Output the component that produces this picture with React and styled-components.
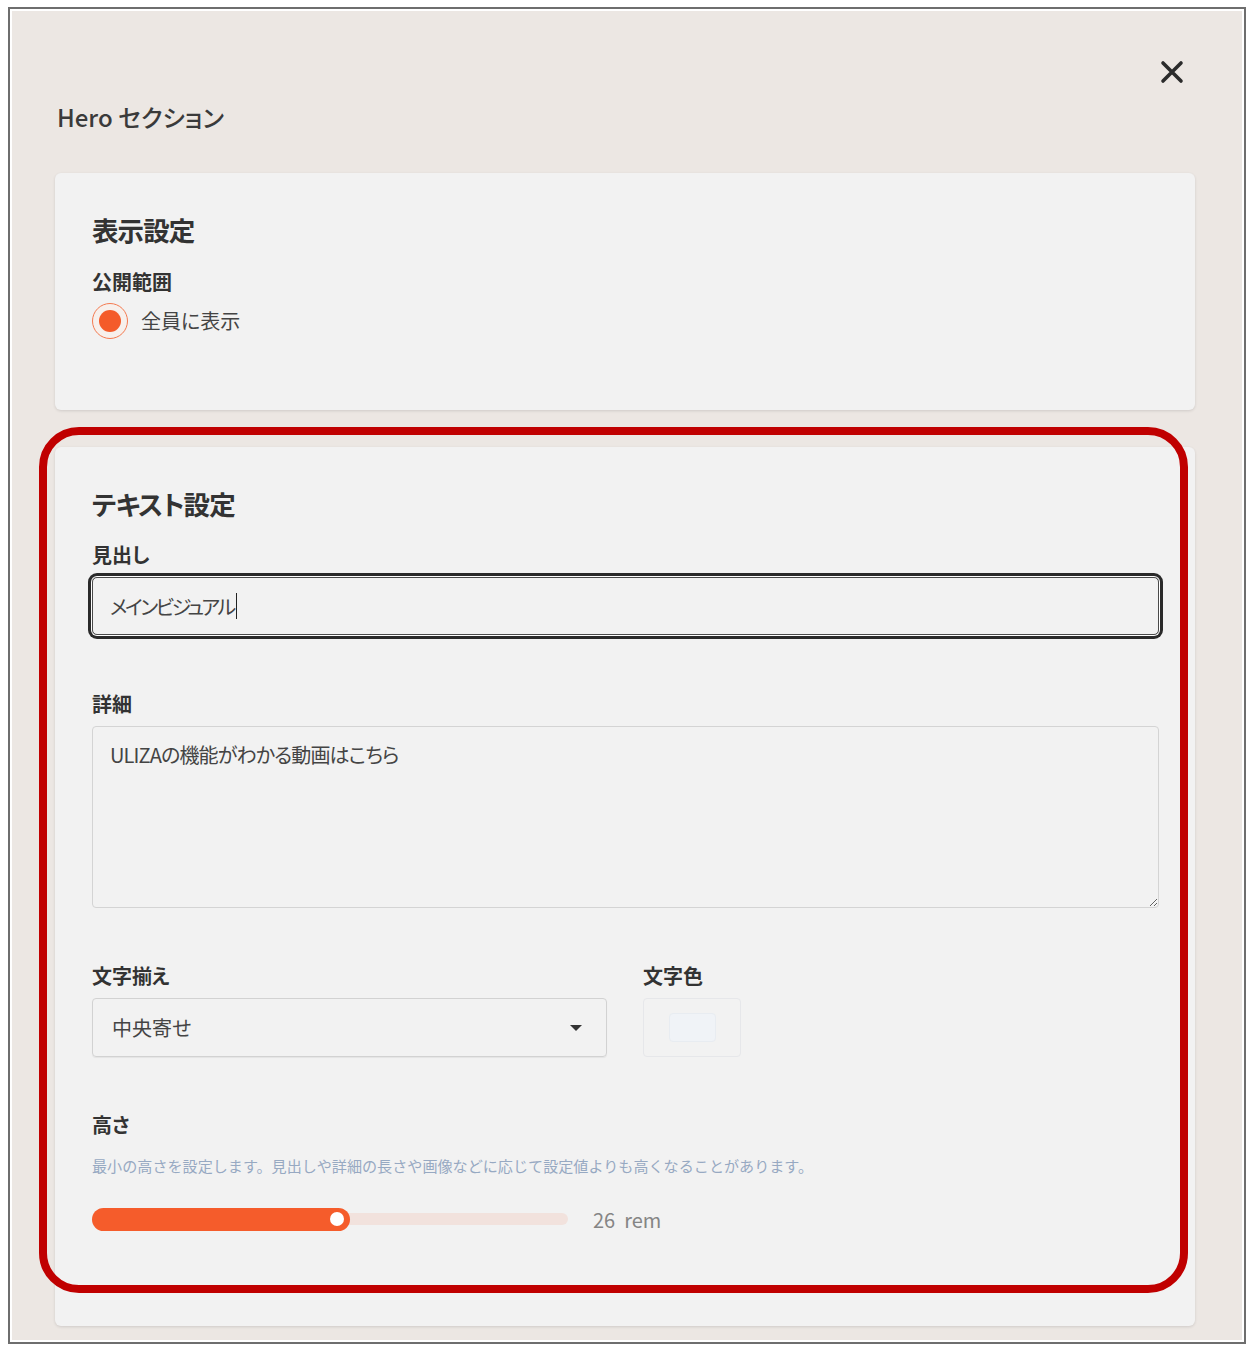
import React from 'react';
import styled, { createGlobalStyle } from 'styled-components';

const GlobalStyle = createGlobalStyle`
  * {
    box-sizing: border-box;
  }
  body {
    margin: 0;
    background: #fff;
    color: #333;
    font-family: "Noto Sans CJK JP", "Noto Sans", sans-serif;
    font-feature-settings: "palt";
  }
`;

const Page = styled.div`
  padding: 7px 0 0 8px;
`;

const Frame = styled.div`
  width: 1238px;
  height: 1337px;
  border: 2px solid #6e6e6e;
  padding: 2px;
  background: #fff;
`;

const Drawer = styled.div`
  height: 100%;
  background: #ece7e3;
  padding: 49px 47px 14px 43px;
  display: flex;
  flex-direction: column;
`;

const CloseRow = styled.div`
  display: flex;
  justify-content: flex-end;
  padding-right: 11px;
  height: 24px;
`;

const CloseButton = styled.button`
  width: 24px;
  height: 24px;
  padding: 0;
  border: none;
  background: transparent;
  cursor: pointer;
  display: flex;
`;

const Title = styled.h1`
  margin: 17px 0 40px 2px;
  font-size: 24px;
  line-height: 32px;
  font-weight: 500;
  color: #3a3a3a;
`;

const Card = styled.section`
  position: relative;
  background: #f2f2f2;
  border-radius: 6px;
  box-shadow: 0 1px 3px rgba(0, 0, 0, 0.12);
  padding: 38px 36px ${(p) => p.$bottom}px 37px;
  margin-top: ${(p) => p.$top || 0}px;
  display: flex;
  flex-direction: column;
`;

/* red outline drawn around the text settings card */
const Highlight = styled.div`
  position: absolute;
  top: -20px;
  left: -16px;
  right: 7px;
  bottom: 33px;
  border: 8.5px solid #c00000;
  border-radius: 40px;
  pointer-events: none;
`;

const SectionTitle = styled.h2`
  margin: 0;
  font-size: 26.5px;
  line-height: 38px;
  font-weight: 700;
  letter-spacing: -0.9px;
  color: #333;
`;

const Field = styled.div`
  display: flex;
  flex-direction: column;
  gap: 8px;
  margin-top: ${(p) => p.$top}px;
  width: ${(p) => (p.$width ? `${p.$width}px` : 'auto')};
`;

const Label = styled.label`
  font-size: 20px;
  line-height: 28px;
  font-weight: 700;
  color: #333;
`;

const RadioRow = styled.div`
  display: flex;
  align-items: center;
  gap: 13px;
  margin-top: 7px;
  font-size: 20px;
  line-height: 32px;
  color: #444;
`;

const RadioMark = styled.span`
  width: 36px;
  height: 36px;
  border-radius: 50%;
  border: 1.5px solid #f47a50;
  background: #f7f0ec;
  display: flex;
  align-items: center;
  justify-content: center;

  &::after {
    content: '';
    width: 22px;
    height: 22px;
    border-radius: 50%;
    background: #f45b2a;
  }
`;

const TextBox = styled.div`
  height: 58px;
  border: 1px solid #4a4a4a;
  border-radius: 5px;
  box-shadow: 0 0 0 1px #fff, 0 0 0 4px #2a2a2a;
  padding: 0 17px;
  display: flex;
  align-items: center;
  font-size: 20px;
  letter-spacing: -2.4px;
  color: #444;
`;

const Caret = styled.span`
  width: 1.5px;
  height: 26px;
  margin-left: 2px;
  background: #222;
`;

const TextArea = styled.textarea`
  display: block;
  width: 100%;
  height: 182px;
  padding: 14px 17px;
  border: 1px solid #d4d4d4;
  border-radius: 4px;
  background: #f2f2f2;
  font-family: inherit;
  font-feature-settings: "palt";
  font-size: 20px;
  line-height: 28px;
  letter-spacing: -0.85px;
  color: #444;
  resize: vertical;
  outline: none;
`;

const Row = styled.div`
  display: flex;
  gap: 36px;
  margin-top: 54px;
`;

const Select = styled.div`
  height: 59px;
  border: 1px solid #d2d2d2;
  border-radius: 4px;
  box-shadow: 0 1px 1px rgba(0, 0, 0, 0.06);
  padding: 0 24px 0 19px;
  display: flex;
  align-items: center;
  justify-content: space-between;
  font-size: 20px;
  color: #444;
`;

const Arrow = styled.span`
  width: 0;
  height: 0;
  border-left: 6px solid transparent;
  border-right: 6px solid transparent;
  border-top: 6px solid #333;
`;

const ColorBox = styled.div`
  width: 98px;
  height: 59px;
  border: 1px solid #e6e7ea;
  border-radius: 4px;
  display: flex;
  align-items: center;
  justify-content: center;
`;

const Swatch = styled.span`
  width: 47px;
  height: 29px;
  border-radius: 4px;
  border: 1px solid #e8ecf1;
  background: ${(p) => p.$color};
`;

const Helper = styled.p`
  margin: 14px 0 0;
  font-size: 15.1px;
  line-height: 24px;
  font-feature-settings: normal;
  color: #97a9c2;
`;

const SliderRow = styled.div`
  margin-top: 27px;
  height: 30px;
  display: flex;
  align-items: center;
  gap: 25px;
`;

const Track = styled.div`
  width: 476px;
  height: 12px;
  border-radius: 6px;
  background: #f2e2dd;
  display: flex;
  align-items: center;
`;

const Fill = styled.div`
  flex: none;
  height: 23px;
  border-radius: 12px;
  background: #f55c2b;
  display: flex;
  align-items: center;
  justify-content: flex-end;
  padding-right: 6px;
`;

const Thumb = styled.span`
  width: 14px;
  height: 14px;
  border-radius: 50%;
  background: #fff;
`;

const Value = styled.div`
  display: flex;
  gap: 9px;
  font-size: 20px;
  color: #858585;
`;

const CloseIcon = () => (
  <svg width="24" height="24" viewBox="0 0 24 24" fill="none">
    <path d="M3 3L21 21M21 3L3 21" stroke="#2b2b2b" strokeWidth="3.6" strokeLinecap="round" />
  </svg>
);

export default function App() {
  const height = { value: 26, min: 0, max: 48 };
  const pct = ((height.value - height.min) / (height.max - height.min)) * 100;

  return (
    <>
      <GlobalStyle />
      <Page>
        <Frame>
          <Drawer>
            <CloseRow>
              <CloseButton aria-label="閉じる">
                <CloseIcon />
              </CloseButton>
            </CloseRow>
            <Title>Hero セクション</Title>

            <Card $bottom={71}>
              <SectionTitle>表示設定</SectionTitle>
              <Field $top={19}>
                <Label>公開範囲</Label>
              </Field>
              <RadioRow>
                <RadioMark />
                全員に表示
              </RadioRow>
            </Card>

            <Card $top={37} $bottom={92}>
              <SectionTitle>テキスト設定</SectionTitle>
              <Field $top={18}>
                <Label>見出し</Label>
                <TextBox>
                  メインビジュアル
                  <Caret />
                </TextBox>
              </Field>
              <Field $top={55}>
                <Label>詳細</Label>
                <TextArea defaultValue="ULIZAの機能がわかる動画はこちら" />
              </Field>
              <Row>
                <Field $top={0} $width={515}>
                  <Label>文字揃え</Label>
                  <Select>
                    中央寄せ
                    <Arrow />
                  </Select>
                </Field>
                <Field $top={0}>
                  <Label>文字色</Label>
                  <ColorBox>
                    <Swatch $color="#f0f3f7" />
                  </ColorBox>
                </Field>
              </Row>
              <Field $top={54}>
                <Label>高さ</Label>
              </Field>
              <Helper>
                最小の高さを設定します。見出しや詳細の長さや画像などに応じて設定値よりも高くなることがあります。
              </Helper>
              <SliderRow>
                <Track>
                  <Fill style={{ width: `${pct}%` }}>
                    <Thumb />
                  </Fill>
                </Track>
                <Value>
                  <span>{height.value}</span>
                  <span>rem</span>
                </Value>
              </SliderRow>
              <Highlight />
            </Card>
          </Drawer>
        </Frame>
      </Page>
    </>
  );
}
